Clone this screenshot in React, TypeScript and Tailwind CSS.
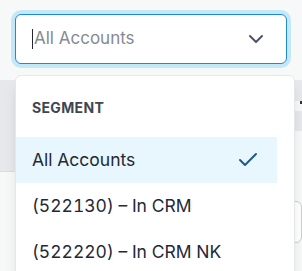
import { Check, ChevronDown } from "lucide-react";

const options = [
  { label: "All Accounts", selected: true },
  { label: "(522130) – In CRM", selected: false },
  { label: "(522220) – In CRM NK", selected: false },
];

export default function App() {
  return (
    <div
      className="relative h-[271px] w-[302px] overflow-hidden bg-[#f7f8f8]"
      style={{ fontFamily: "Inter, 'Noto Sans', sans-serif" }}
    >
      {/* Select trigger */}
      <div className="px-[15px] pt-[14px]">
        <div className="flex h-[50px] items-center rounded-[6px] border border-[#1d8bd1] bg-white pl-[16px] pr-[18px] ring-4 ring-[#c3e9f9]">
          <span className="mr-[1px] h-[20px] w-[1px] bg-[#1f2937]" />
          <span className="flex-1 text-[17px] text-[#858a93]">All Accounts</span>
          <ChevronDown size={24} strokeWidth={2} className="text-[#4b5563]" />
        </div>
      </div>

      {/* Page content behind the menu */}
      <div className="mt-[16px] grid grid-cols-[150px_1fr]">
        <div className="h-[92px] border-b border-[#d9dce0] bg-[#e6e8eb]" />
        <div className="flex flex-col">
          <div className="h-[21px] bg-[#e6e8eb]" />
          <div className="h-[10px]" />
          <div className="flex h-[20px] items-start justify-end bg-[#e6e8eb]">
            <span className="mt-[-10px] h-[3px] w-[2px] bg-[#333]" />
          </div>
          <div className="mt-[70px] h-[42px] rounded-[6px] border border-[#c9ccd1] bg-white" />
        </div>
      </div>

      {/* Dropdown menu */}
      <div className="absolute left-[15px] top-[75px] h-[230px] w-[280px] rounded-[6px] border border-[#e5e7eb] bg-white shadow-lg">
        <div className="pr-[17px] pt-[24px]">
          <div className="mb-[21px] px-[16px] text-[14px] font-bold leading-[16px] tracking-wide text-[#3f4650]">
            SEGMENT
          </div>
          <ul>
            {options.map((o) => (
              <li
                key={o.label}
                className={`flex h-[46px] items-center justify-between pl-[16px] pr-[17px] text-[17.5px] text-[#1f2937] ${
                  o.selected ? "bg-[#e8f6fd]" : ""
                }`}
              >
                <span className="tabular-nums">{o.label}</span>
                {o.selected && <Check size={24} strokeWidth={2} className="text-[#1e5b8a]" />}
              </li>
            ))}
          </ul>
        </div>
      </div>
    </div>
  );
}
